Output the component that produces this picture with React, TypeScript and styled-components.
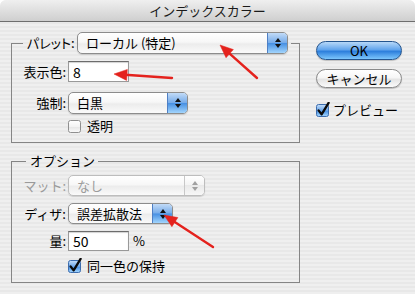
import React from 'react'
import styled, { createGlobalStyle } from 'styled-components'

const GlobalStyle = createGlobalStyle`
  html, body {
    margin: 0;
    padding: 0;
    background: #ffffff;
  }
  body {
    font-family: "Noto Sans CJK JP", "Noto Sans", sans-serif;
    font-size: 13px;
    color: #000;
  }
`

const Window = styled.div`
  position: relative;
  width: 415px;
  height: 294px;
  overflow: hidden;
  border-radius: 6px 6px 0 0;
  background: repeating-linear-gradient(to bottom, #efefef 0 2px, #e8e8e8 2px 4px);
`

const TitleBar = styled.div`
  height: 21px;
  border-bottom: 1px solid #6e6e6e;
  border-radius: 6px 6px 0 0;
  background: linear-gradient(to bottom, #efefef, #cfcfcf);
  display: flex;
  align-items: center;
  justify-content: center;
  font-size: 13px;
  line-height: 21px;
  color: #1a1a1a;
`

const Body = styled.div`
  display: flex;
  padding: 10px 0 0 11px;
`

const LeftColumn = styled.div`
  width: 289px;
  display: flex;
  flex-direction: column;
  gap: 10px;
`

const RightColumn = styled.div`
  width: 86px;
  margin-left: 16px;
  padding-top: 9px;
  display: flex;
  flex-direction: column;
`

const Group = styled.fieldset<{ $bottom: number }>`
  margin: 0;
  min-width: 0;
  padding: 0 0 ${(p) => p.$bottom}px 0;
  border: 1px solid #858585;
  display: flex;
  flex-direction: column;
`

const Legend = styled.legend<{ $offset: number }>`
  margin-left: ${(p) => p.$offset}px;
  padding: 0 3px 0 4px;
  line-height: 16px;
`

const LegendRow = styled.div`
  display: flex;
  align-items: center;
`

const GroupBody = styled.div<{ $top: number; $gap: number }>`
  padding-top: ${(p) => p.$top}px;
  display: flex;
  flex-direction: column;
  gap: ${(p) => p.$gap}px;
`

const Row = styled.div<{ $height: number; $indent?: number; $top?: number }>`
  display: flex;
  align-items: center;
  height: ${(p) => p.$height}px;
  padding-left: ${(p) => p.$indent ?? 0}px;
  margin-top: ${(p) => p.$top ?? 0}px;
`

const FieldLabel = styled.span<{ $disabled?: boolean }>`
  box-sizing: border-box;
  width: 56px;
  padding-right: 2px;
  text-align: right;
  line-height: 16px;
  white-space: nowrap;
  color: ${(p) => (p.$disabled ? '#9a9a9a' : '#000')};
`

const LegendLabel = styled.span`
  width: 50px;
  line-height: 16px;
  white-space: nowrap;
  font-feature-settings: "palt";
`

const PopupBox = styled.div<{ $width: number; $height: number; $disabled?: boolean }>`
  box-sizing: border-box;
  display: flex;
  width: ${(p) => p.$width}px;
  height: ${(p) => p.$height}px;
  border: 1px solid ${(p) => (p.$disabled ? '#bdbdbd' : '#8c8c8c')};
  border-radius: 5px;
  overflow: hidden;
  background: linear-gradient(to bottom, #ffffff 0%, #f7f7f7 45%, #ececec 55%, #fafafa 100%);
  box-shadow: 0 1px 1px rgba(0, 0, 0, 0.14);
`

const PopupText = styled.span<{ $disabled?: boolean }>`
  flex: 1;
  display: flex;
  align-items: center;
  padding-left: 8px;
  line-height: 16px;
  color: ${(p) => (p.$disabled ? '#9c9c9c' : '#000')};
`

const PopupArrows = styled.span<{ $disabled?: boolean }>`
  width: 19px;
  display: flex;
  flex-direction: column;
  align-items: center;
  justify-content: center;
  gap: 2px;
  border-left: 1px solid ${(p) => (p.$disabled ? '#c8c8c8' : '#4f7fc4')};
  background: ${(p) =>
    p.$disabled
      ? 'linear-gradient(to bottom, #ffffff, #f3f3f3 50%, #e9e9e9 50%, #f7f7f7)'
      : 'linear-gradient(to bottom, #c2dbf7 0%, #77acea 48%, #4790e3 52%, #a2d5fd 100%)'};
`

const ArrowUp = styled.span<{ $disabled?: boolean }>`
  width: 0;
  height: 0;
  border-left: 3px solid transparent;
  border-right: 3px solid transparent;
  border-bottom: 4px solid ${(p) => (p.$disabled ? '#a0a0a0' : '#111')};
`

const ArrowDown = styled.span<{ $disabled?: boolean }>`
  width: 0;
  height: 0;
  border-left: 3px solid transparent;
  border-right: 3px solid transparent;
  border-top: 4px solid ${(p) => (p.$disabled ? '#a0a0a0' : '#111')};
`

const TextField = styled.input<{ $width: number; $height: number }>`
  box-sizing: border-box;
  width: ${(p) => p.$width}px;
  height: ${(p) => p.$height}px;
  margin: 0;
  padding: 0 0 0 4px;
  border: 1px solid #999;
  border-top-color: #6c6c6c;
  box-shadow: inset 0 1px 1px rgba(0, 0, 0, 0.18);
  background: #fff;
  font-family: "Noto Sans CJK JP", "Noto Sans", sans-serif;
  font-size: 14px;
  color: #000;
  outline: none;
`

const Unit = styled.span`
  margin-left: 4px;
  line-height: 16px;
`

const CheckLabel = styled.span<{ $gap?: number }>`
  margin-left: ${(p) => p.$gap ?? 5}px;
  line-height: 16px;
  white-space: nowrap;
`

const AquaButton = styled.div<{ $primary?: boolean }>`
  box-sizing: border-box;
  height: 19px;
  border-radius: 10px;
  display: flex;
  align-items: center;
  justify-content: center;
  font-size: 13px;
  line-height: 16px;
  color: #000;
  border: 1px solid ${(p) => (p.$primary ? '#24558f' : '#8a8a8a')};
  background: ${(p) =>
    p.$primary
      ? 'linear-gradient(to bottom, #b7d8f8 0%, #62a5ed 45%, #2d7fdc 55%, #7cc6fc 100%)'
      : 'linear-gradient(to bottom, #ffffff 0%, #f6f6f6 45%, #e4e4e4 55%, #fbfbfb 100%)'};
  box-shadow: 0 1px 1px rgba(0, 0, 0, 0.2);
`

const ButtonGap = styled.div<{ $size: number }>`
  height: ${(p) => p.$size}px;
  flex: none;
`

const Overlay = styled.svg`
  position: absolute;
  left: 0;
  top: 0;
  pointer-events: none;
`

function Popup({ width, height = 21, disabled, children }: {
  width: number
  height?: number
  disabled?: boolean
  children: React.ReactNode
}) {
  return (
    <PopupBox $width={width} $height={height} $disabled={disabled}>
      <PopupText $disabled={disabled}>{children}</PopupText>
      <PopupArrows $disabled={disabled}>
        <ArrowUp $disabled={disabled} />
        <ArrowDown $disabled={disabled} />
      </PopupArrows>
    </PopupBox>
  )
}

function CheckBox({ checked }: { checked?: boolean }) {
  return (
    <svg width="14" height="16" viewBox="0 0 14 16" style={{ flex: 'none' }}>
      <defs>
        <linearGradient id="cbBlue" x1="0" y1="0" x2="0" y2="1">
          <stop offset="0" stopColor="#c8e0fa" />
          <stop offset="0.5" stopColor="#6aa6ea" />
          <stop offset="0.55" stopColor="#4b92e3" />
          <stop offset="1" stopColor="#a6d8ff" />
        </linearGradient>
        <linearGradient id="cbWhite" x1="0" y1="0" x2="0" y2="1">
          <stop offset="0" stopColor="#ffffff" />
          <stop offset="0.5" stopColor="#f3f3f3" />
          <stop offset="0.55" stopColor="#e6e6e6" />
          <stop offset="1" stopColor="#fbfbfb" />
        </linearGradient>
      </defs>
      <rect
        x="0.5"
        y="2.5"
        width="12"
        height="12"
        rx="2"
        fill={checked ? 'url(#cbBlue)' : 'url(#cbWhite)'}
        stroke={checked ? '#3d6dae' : '#8f8f8f'}
      />
      {checked && (
        <path d="M2.6 8.4 L5.6 12.4 L12.6 0.8" fill="none" stroke="#0a0a0a" strokeWidth="2.3" strokeLinecap="round" strokeLinejoin="round" />
      )}
    </svg>
  )
}

function RedArrow({ from, to }: { from: [number, number]; to: [number, number] }) {
  const [x1, y1] = from
  const [x2, y2] = to
  const len = Math.hypot(x2 - x1, y2 - y1)
  const ux = (x2 - x1) / len
  const uy = (y2 - y1) / len
  const head = 13
  const half = 5.5
  const bx = x2 - ux * head
  const by = y2 - uy * head
  const pts = `${x2},${y2} ${bx - uy * half},${by + ux * half} ${bx + uy * half},${by - ux * half}`
  return (
    <g fill="#e4221d" stroke="#e4221d">
      <line x1={x1} y1={y1} x2={bx + ux * 2} y2={by + uy * 2} strokeWidth="2.4" strokeLinecap="round" />
      <polygon points={pts} strokeWidth="0.5" strokeLinejoin="round" />
    </g>
  )
}

export default function App() {
  return (
    <>
      <GlobalStyle />
      <Window>
        <TitleBar>インデックスカラー</TitleBar>
        <Body>
          <LeftColumn>
            <Group $bottom={8}>
              <Legend $offset={11}>
                <LegendRow>
                  <LegendLabel>パレット:</LegendLabel>
                  <Popup width={211} height={22}>ローカル (特定)</Popup>
                </LegendRow>
              </Legend>
              <GroupBody $top={7} $gap={10}>
                <Row $height={21}>
                  <FieldLabel>表示色:</FieldLabel>
                  <TextField $width={61} $height={21} readOnly value="8" />
                </Row>
                <Row $height={22}>
                  <FieldLabel>強制:</FieldLabel>
                  <Popup width={120} height={22}>白黒</Popup>
                </Row>
              </GroupBody>
              <Row $height={16} $indent={56} $top={4}>
                <CheckBox />
                <CheckLabel>透明</CheckLabel>
              </Row>
            </Group>

            <Group $bottom={8}>
              <Legend $offset={14}>
                <LegendRow>オプション</LegendRow>
              </Legend>
              <GroupBody $top={6} $gap={7}>
                <Row $height={21}>
                  <FieldLabel $disabled>マット:</FieldLabel>
                  <Popup width={137} disabled>なし</Popup>
                </Row>
                <Row $height={21}>
                  <FieldLabel>ディザ:</FieldLabel>
                  <Popup width={105}>誤差拡散法</Popup>
                </Row>
                <Row $height={20}>
                  <FieldLabel>量:</FieldLabel>
                  <TextField $width={61} $height={20} readOnly value="50" />
                  <Unit>%</Unit>
                </Row>
                <Row $height={16} $indent={56}>
                  <CheckBox checked />
                  <CheckLabel>同一色の保持</CheckLabel>
                </Row>
              </GroupBody>
            </Group>
          </LeftColumn>

          <RightColumn>
            <AquaButton $primary>OK</AquaButton>
            <ButtonGap $size={9} />
            <AquaButton>キャンセル</AquaButton>
            <ButtonGap $size={14} />
            <Row $height={16}>
              <CheckBox checked />
              <CheckLabel $gap={3}>プレビュー</CheckLabel>
            </Row>
          </RightColumn>
        </Body>

        <Overlay width="415" height="294" viewBox="0 0 415 294">
          <RedArrow from={[257, 78]} to={[220, 45]} />
          <RedArrow from={[172, 78]} to={[114, 74]} />
          <RedArrow from={[213, 247]} to={[164, 215]} />
        </Overlay>
      </Window>
    </>
  )
}
